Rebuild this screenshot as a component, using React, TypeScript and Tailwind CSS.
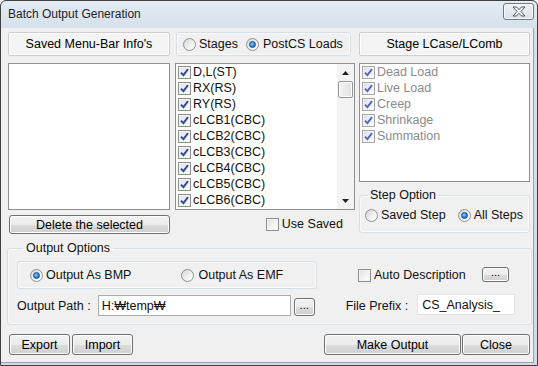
import React from 'react'

const FONT = { fontFamily: '"Liberation Sans", Arial, sans-serif' }

const Check = ({ checked, dim }: { checked?: boolean; dim?: boolean }) => (
  <span
    className={`flex h-[13px] w-[13px] shrink-0 items-center justify-center border ${
      dim ? 'border-[#a6a6a6]' : 'border-[#8e8f8f]'
    } bg-[linear-gradient(135deg,#dedede,#f8f8f8_70%,#ffffff)] shadow-[inset_0_0_0_1px_#f4f4f4]`}
  >
    {checked && (
      <svg width="9" height="9" viewBox="0 0 9 9">
        <path
          d="M1 4.6 L3.4 7.2 L8 1.2"
          stroke={dim ? '#4a6fc0' : '#2b4c9f'}
          strokeWidth="1.9"
          fill="none"
        />
      </svg>
    )}
  </span>
)

const Radio = ({ on }: { on?: boolean }) => (
  <span className="flex h-[13px] w-[13px] shrink-0 items-center justify-center rounded-full border border-[#8e8f8f] bg-[linear-gradient(135deg,#d6d6d6,#f6f6f6_70%,#ffffff)]">
    {on && (
      <span className="h-[7px] w-[7px] rounded-full border border-[#1b4f8a] bg-[radial-gradient(circle_at_40%_40%,#7fd0ff,#1f7fcf_60%,#0b4e94)]" />
    )}
  </span>
)

const Button = ({ children, className = '' }: { children: React.ReactNode; className?: string }) => (
  <div
    className={`flex items-center justify-center rounded-[3px] border border-[#707070] bg-[linear-gradient(#f2f2f2_0%,#ebebeb_50%,#dddddd_51%,#cfcfcf_100%)] text-black shadow-[inset_0_0_0_1px_#fcfcfc] ${className}`}
  >
    {children}
  </div>
)

const Header = ({ children }: { children: React.ReactNode }) => (
  <div className="flex h-[24px] items-center justify-center rounded-[2px] border border-[#cdcdcd] bg-[#f4f4f4] text-black shadow-[inset_0_0_0_1px_#ffffff]">
    {children}
  </div>
)

const loads = ['D,L(ST)', 'RX(RS)', 'RY(RS)', 'cLCB1(CBC)', 'cLCB2(CBC)', 'cLCB3(CBC)', 'cLCB4(CBC)', 'cLCB5(CBC)', 'cLCB6(CBC)']
const stages = ['Dead Load', 'Live Load', 'Creep', 'Shrinkage', 'Summation']

export default function App() {
  return (
    <div
      style={FONT}
      className="flex h-[366px] w-[538px] flex-col overflow-hidden rounded-t-[6px] border border-[#3f3f3f] bg-[linear-gradient(#e4ecf5,#d3dfeb_30px,#cfdbe7)] text-[12.5px] leading-[14px] text-[#111]"
    >
      <div className="flex h-[27px] shrink-0 items-center justify-between pl-[7px] pr-[3px]">
        <span className="pb-[1px] text-[12px] text-[#1e1e1e]">Batch Output Generation</span>
        <div className="mb-[6px] flex h-[17px] w-[31px] items-center justify-center rounded-[3px] border border-[#6f7781] bg-[linear-gradient(#eef2f6,#d9e1ea)] shadow-[inset_0_0_0_1px_#f7f9fb]">
          <svg width="14" height="11" viewBox="0 0 14 11">
            <path
              d="M1 1 H4.5 L7 3.6 L9.5 1 H13 L8.9 5.5 L13 10 H9.5 L7 7.4 L4.5 10 H1 L5.1 5.5 Z"
              fill="#f6f7f9"
              stroke="#4d5560"
              strokeWidth="1"
              strokeLinejoin="round"
            />
          </svg>
        </div>
      </div>

      <div className="mb-[2px] mr-[3px] flex flex-1 flex-col border-b border-r border-[#9aa3ad] bg-[#f0f0f0] pl-[7px] pt-[4px]">
        {/* top section */}
        <div className="flex">
          <div className="flex w-[162px] flex-col">
            <Header>Saved Menu-Bar Info's</Header>
            <div className="mt-[7px] h-[147px] border border-[#8e8f8f] bg-white" />
            <Button className="ml-[1px] mt-[5px] h-[19px] w-[161px]">Delete the selected</Button>
          </div>

          <div className="ml-[5px] flex w-[180px] flex-col">
            <div className="ml-[1px] flex h-[24px] w-[175px] items-center rounded-[3px] border border-[#d5dfe5] pl-[6px] shadow-[inset_0_0_0_1px_#fafafa]">
              <Radio />
              <span className="ml-[3px]">Stages</span>
              <span className="ml-[8px]">
                <Radio on />
              </span>
              <span className="ml-[4px]">PostCS Loads</span>
            </div>
            <div className="mt-[7px] flex h-[147px] border border-[#8e8f8f] bg-white">
              <div className="flex flex-1 flex-col pl-[2px]">
                {loads.map((l) => (
                  <div key={l} className="flex h-[16px] items-center">
                    <Check checked />
                    <span className="ml-[2px]">{l}</span>
                  </div>
                ))}
              </div>
              <div className="flex w-[17px] flex-col items-center bg-[#f3f3f3]">
                <div className="flex h-[17px] items-center justify-center">
                  <svg width="7" height="4" viewBox="0 0 7 4">
                    <path d="M0 4 L3.5 0 L7 4 Z" fill="#222" />
                  </svg>
                </div>
                <div className="h-[17px] w-[15px] rounded-[2px] border border-[#979797] bg-[linear-gradient(90deg,#f3f3f3,#e2e2e2)] shadow-[inset_0_0_0_1px_#fbfbfb]" />
                <div className="flex-1" />
                <div className="flex h-[17px] items-center justify-center">
                  <svg width="7" height="4" viewBox="0 0 7 4">
                    <path d="M0 0 L3.5 4 L7 0 Z" fill="#222" />
                  </svg>
                </div>
              </div>
            </div>
            <div className="mt-[7px] flex items-center justify-end pr-[12px]">
              <Check />
              <span className="ml-[3px]">Use Saved</span>
            </div>
          </div>

          <div className="ml-[4px] flex w-[171px] flex-col">
            <Header>Stage LCase/LComb</Header>
            <div className="mt-[7px] flex h-[119px] flex-col border border-[#8e8f8f] bg-white pl-[2px]">
              {stages.map((s) => (
                <div key={s} className="flex h-[16px] items-center text-[#8a8a8a]">
                  <Check checked dim />
                  <span className="ml-[2px]">{s}</span>
                </div>
              ))}
            </div>
            <fieldset className="mt-[6px] h-[45px] rounded-[3px] border border-[#d5dfe5] px-[5px] shadow-[inset_0_0_0_1px_#fafafa]">
              <legend className="ml-[3px] px-[2px] leading-[14px]">Step Option</legend>
              <div className="mt-[6px] flex items-center">
                <Radio />
                <span className="ml-[3px]">Saved Step</span>
                <span className="ml-[12px]">
                  <Radio on />
                </span>
                <span className="ml-[3px]">All Steps</span>
              </div>
            </fieldset>
          </div>
        </div>

        {/* output options */}
        <fieldset className="-ml-[1px] mt-[7px] h-[84px] w-[525px] rounded-[3px] border border-[#d5dfe5] pl-[9px] shadow-[inset_0_0_0_1px_#fafafa]">
          <legend className="ml-[6px] px-[3px] leading-[14px]">Output Options</legend>
          <div className="mt-[6px] flex items-center">
            <div className="flex h-[28px] w-[300px] items-center rounded-[3px] border border-[#d5dfe5] pl-[12px] shadow-[inset_0_0_0_1px_#fafafa]">
              <Radio on />
              <span className="ml-[3px]">Output As BMP</span>
              <span className="ml-[50px]">
                <Radio />
              </span>
              <span className="ml-[4px]">Output As EMF</span>
            </div>
            <div className="ml-[41px] flex items-center">
              <Check />
              <span className="ml-[3px]">Auto Description</span>
            </div>
            <div className="flex-1" />
            <Button className="mr-[22px] mt-[-2px] h-[15px] w-[27px] pb-[4px] text-[11px]">...</Button>
          </div>
          <div className="mt-[6px] flex items-center">
            <span>Output Path :</span>
            <div className="ml-[7px] flex h-[21px] w-[193px] items-center border border-[#abadb3] bg-white pl-[3px]">
              H:₩temp₩
            </div>
            <Button className="ml-[3px] mt-[2px] h-[18px] w-[21px] pb-[4px] text-[11px]">...</Button>
            <span className="ml-[31px]">File Prefix :</span>
            <div className="ml-[9px] mt-[-2px] flex h-[21px] w-[98px] items-center border border-[#e3e3e3] bg-white pl-[4px]">
              CS_Analysis_
            </div>
          </div>
        </fieldset>

        {/* bottom buttons */}
        <div className="mt-[9px] flex pr-[3px]">
          <Button className="ml-[1px] h-[21px] w-[61px]">Export</Button>
          <Button className="ml-[2px] h-[21px] w-[61px]">Import</Button>
          <div className="flex-1" />
          <Button className="h-[21px] w-[137px]">Make Output</Button>
          <Button className="ml-[1px] h-[21px] w-[68px]">Close</Button>
        </div>
      </div>
    </div>
  )
}
